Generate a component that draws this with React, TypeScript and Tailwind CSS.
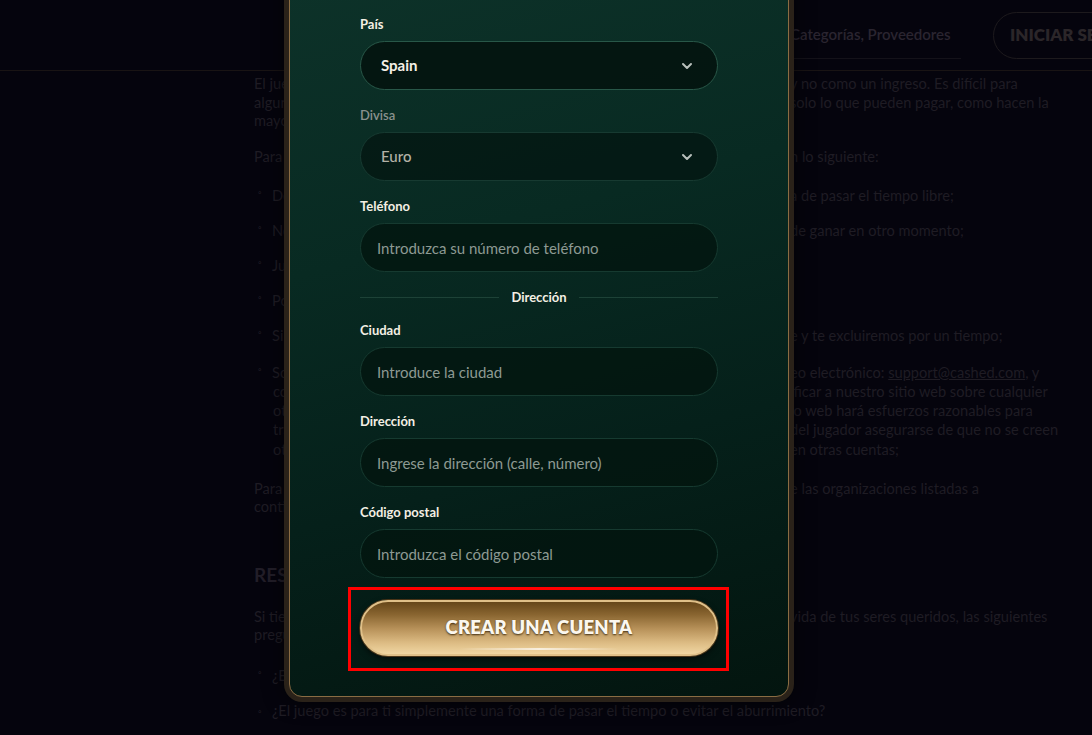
import { ChevronDown } from "lucide-react";

type Row = { l: string; r?: string; bullet?: boolean; mt: string };

const page: Row[] = [
  { l: "El juego debe considerarse como una forma de entretenimiento", r: "y no como un ingreso. Es difícil para", mt: "mt-0" },
  { l: "algunas personas controlar sus apuestas y gastar s", r: "solo lo que pueden pagar, como hacen la", mt: "mt-0" },
  { l: "mayoría de los jugadores.", mt: "mt-0" },
  { l: "Para mantener el juego bajo control, te recomendamos tener e", r: "n lo siguiente:", mt: "mt-[17px]" },
  { l: "Decidir de antemano que el juego es solo una form", r: "a de pasar el tiempo libre;", bullet: true, mt: "mt-[21px]" },
  { l: "No intentar recuperar el dinero perdido con la esperanza ", r: "de ganar en otro momento;", bullet: true, mt: "mt-[16.5px]" },
  { l: "Jugar solo con dinero que puedas permitirte perder;", bullet: true, mt: "mt-[16.5px]" },
  { l: "Poner límites de tiempo y de dinero antes de empezar a jugar;", bullet: true, mt: "mt-[16.5px]" },
  { l: "Si sientes que no puedes parar, contacta con nuestro soport", r: "e y te excluiremos por un tiempo;", bullet: true, mt: "mt-[16.5px]" },
];

const multi: { l: string; r: string }[] = [
  { l: "Solicita la autoexclusión escribiendo a nuestro corr", r: "eo electrónico: " },
  { l: "comprométete también a no abrir cuentas nuevas y a not", r: "ificar a nuestro sitio web sobre cualquier" },
  { l: "otra cuenta que tengas. El personal del sit", r: "io web hará esfuerzos razonables para" },
  { l: "tratar de detectar cuentas nuevas, pero es responsabilidad ", r: "del jugador asegurarse de que no se creen" },
  { l: "otras cuentas ni se utilicen sus datos personales ", r: "en otras cuentas;" },
];

function Line({ row }: { row: Row }) {
  return (
    <div className={`${row.mt} flex h-[18.5px] items-center whitespace-nowrap`}>
      <div className="flex w-[536px] overflow-hidden">
        {row.bullet && <span className="ml-1 mr-[10px] text-[10px]">◦</span>}
        <span>{row.l}</span>
      </div>
      {row.r && <span>{row.r}</span>}
    </div>
  );
}

function Field({ label, placeholder }: { label: string; placeholder: string }) {
  return (
    <div className="flex flex-col gap-[9px]">
      <span className="h-4 text-[13px] font-bold leading-4 text-[#f4efe4]">{label}</span>
      <input
        placeholder={placeholder}
        className="h-[49px] w-full rounded-full border border-[#163a30] bg-[#03150f]/80 pl-4 text-[15px] text-white outline-none placeholder:text-[#8d9a93]"
      />
    </div>
  );
}

export default function App() {
  return (
    <div className="relative h-[735px] w-full overflow-hidden bg-[#05040d] font-['Lato',sans-serif] text-[14.6px] text-[#1f1c24]">
      <header className="flex h-[71px] items-center whitespace-nowrap border-b border-[#191414] pl-[254px]">
        <div className="ml-[536px] flex h-[47px] w-[171px] shrink-0 items-center border-b border-[#141219] text-[15px] font-semibold text-[#2a2530]">
          Categorías, Proveedores
        </div>
        <div className="ml-[32px] flex h-[47px] w-[150px] shrink-0 items-center rounded-full border border-[#1d1a1d] pl-[16px] text-[17px] font-extrabold text-[#2b2629]">
          INICIAR SESIÓN
        </div>
      </header>

      <main className="flex flex-col pl-[254px] pt-[4px]">
        {page.map((row, i) => (
          <Line key={i} row={row} />
        ))}
        <div className="mt-[17.5px] flex flex-col">
          {multi.map((m, i) => (
            <div key={i} className="flex h-[19.25px] items-center whitespace-nowrap">
              <div className="flex w-[536px] overflow-hidden">
                {i === 0 ? <span className="ml-1 mr-[10px] text-[10px]">◦</span> : <span className="w-[19px] shrink-0" />}
                <span>{m.l}</span>
              </div>
              <span>
                {m.r}
                {i === 0 && (
                  <>
                    <span className="underline">support@cashed.com</span>, y
                  </>
                )}
              </span>
            </div>
          ))}
        </div>
        <Line row={{ l: "Para obtener ayuda profesional, puedes contactar con cualquiera d", r: "e las organizaciones listadas a", mt: "mt-[20px]" }} />
        <Line row={{ l: "continuación:", mt: "mt-0" }} />
        <h2 className="mt-[48px] h-[22px] text-[19px] font-bold leading-[22px] text-[#221e28]">RESPONSABILIDAD</h2>
        <Line row={{ l: "Si tienes dudas sobre si el juego es un problema en tu vida o en la v", r: "vida de tus seres queridos, las siguientes", mt: "mt-[21px]" }} />
        <Line row={{ l: "preguntas pueden ayudarte a averiguarlo:", mt: "mt-0" }} />
        <Line row={{ l: "¿El juego te impide ir a trabajar o estudiar?", bullet: true, mt: "mt-[22px]" }} />
        <div className="mt-[17px] flex h-[18.5px] items-center whitespace-nowrap">
          <span className="ml-1 mr-[10px] text-[10px]">◦</span>
          <span>¿El juego es para ti simplemente una forma de pasar el tiempo o evitar el aburrimiento?</span>
        </div>
      </main>

      {/* registration modal */}
      <div className="absolute left-[284px] top-[-24px] w-[510px] rounded-[18px] bg-[#2a2219] p-[5px] shadow-[0_0_20px_rgba(0,0,0,0.6)]">
        <div className="rounded-[13px] border border-[#8a6c43] bg-[linear-gradient(165deg,#0d3229_0%,#082a22_35%,#05201a_65%,#03150f_100%)] px-[70px] pb-[40px] pt-[34px]">
          <div className="flex flex-col gap-[17px]">
            <div className="flex flex-col gap-[9px]">
              <span className="h-4 text-[13px] font-bold leading-4 text-[#f4efe4]">País</span>
              <div className="flex h-[49px] items-center justify-between rounded-full border border-[#285748] bg-[#03140f]/90 pl-5 pr-[22px] text-[15px] font-bold text-[#f5f0e6]">
                Spain
                <ChevronDown className="h-4 w-4 text-[#b9c0bc]" strokeWidth={3} />
              </div>
            </div>
            <div className="flex flex-col gap-[9px]">
              <span className="h-4 text-[13px] font-semibold leading-4 text-[#8a928e]">Divisa</span>
              <div className="flex h-[49px] items-center justify-between rounded-full border border-[#173a31] bg-[#03140f]/70 pl-5 pr-[22px] text-[15px] font-medium text-[#b3b2a7]">
                Euro
                <ChevronDown className="h-4 w-4 text-[#b9c0bc]" strokeWidth={3} />
              </div>
            </div>
            <Field label="Teléfono" placeholder="Introduzca su número de teléfono" />
            <div className="flex h-4 items-center gap-3">
              <div className="h-px flex-1 bg-[#1d4237]" />
              <span className="text-[13px] font-bold leading-4 text-[#f4efe4]">Dirección</span>
              <div className="h-px flex-1 bg-[#1d4237]" />
            </div>
            <Field label="Ciudad" placeholder="Introduce la ciudad" />
            <Field label="Dirección" placeholder="Ingrese la dirección (calle, número)" />
            <Field label="Código postal" placeholder="Introduzca el código postal" />
          </div>

          <div className="relative mt-[22px]">
            <button
              type="button"
              className="relative flex h-[56px] w-full items-center justify-center overflow-hidden rounded-full border-2 border-[#e0c088] bg-[linear-gradient(180deg,#664619_0%,#8a6631_25%,#b8925a_52%,#dcbb83_78%,#f0d6a2_100%)] text-[18.5px] font-extrabold tracking-[0.2px] text-[#fbf7ef] shadow-[0_0_0_1px_#4a3518,0_3px_6px_rgba(0,0,0,0.6)] [text-shadow:0_1px_2px_#3f2c10]"
            >
              CREAR UNA CUENTA
              <span className="absolute bottom-[4px] left-1/2 h-[2px] w-[160px] -translate-x-1/2 bg-[linear-gradient(90deg,transparent,rgba(255,255,255,0.7),transparent)]" />
            </button>
            <div className="pointer-events-none absolute -bottom-[15px] -left-[12px] -right-[11px] -top-[13px] border-[3px] border-[#ff0000]" />
          </div>
        </div>
      </div>
    </div>
  );
}
